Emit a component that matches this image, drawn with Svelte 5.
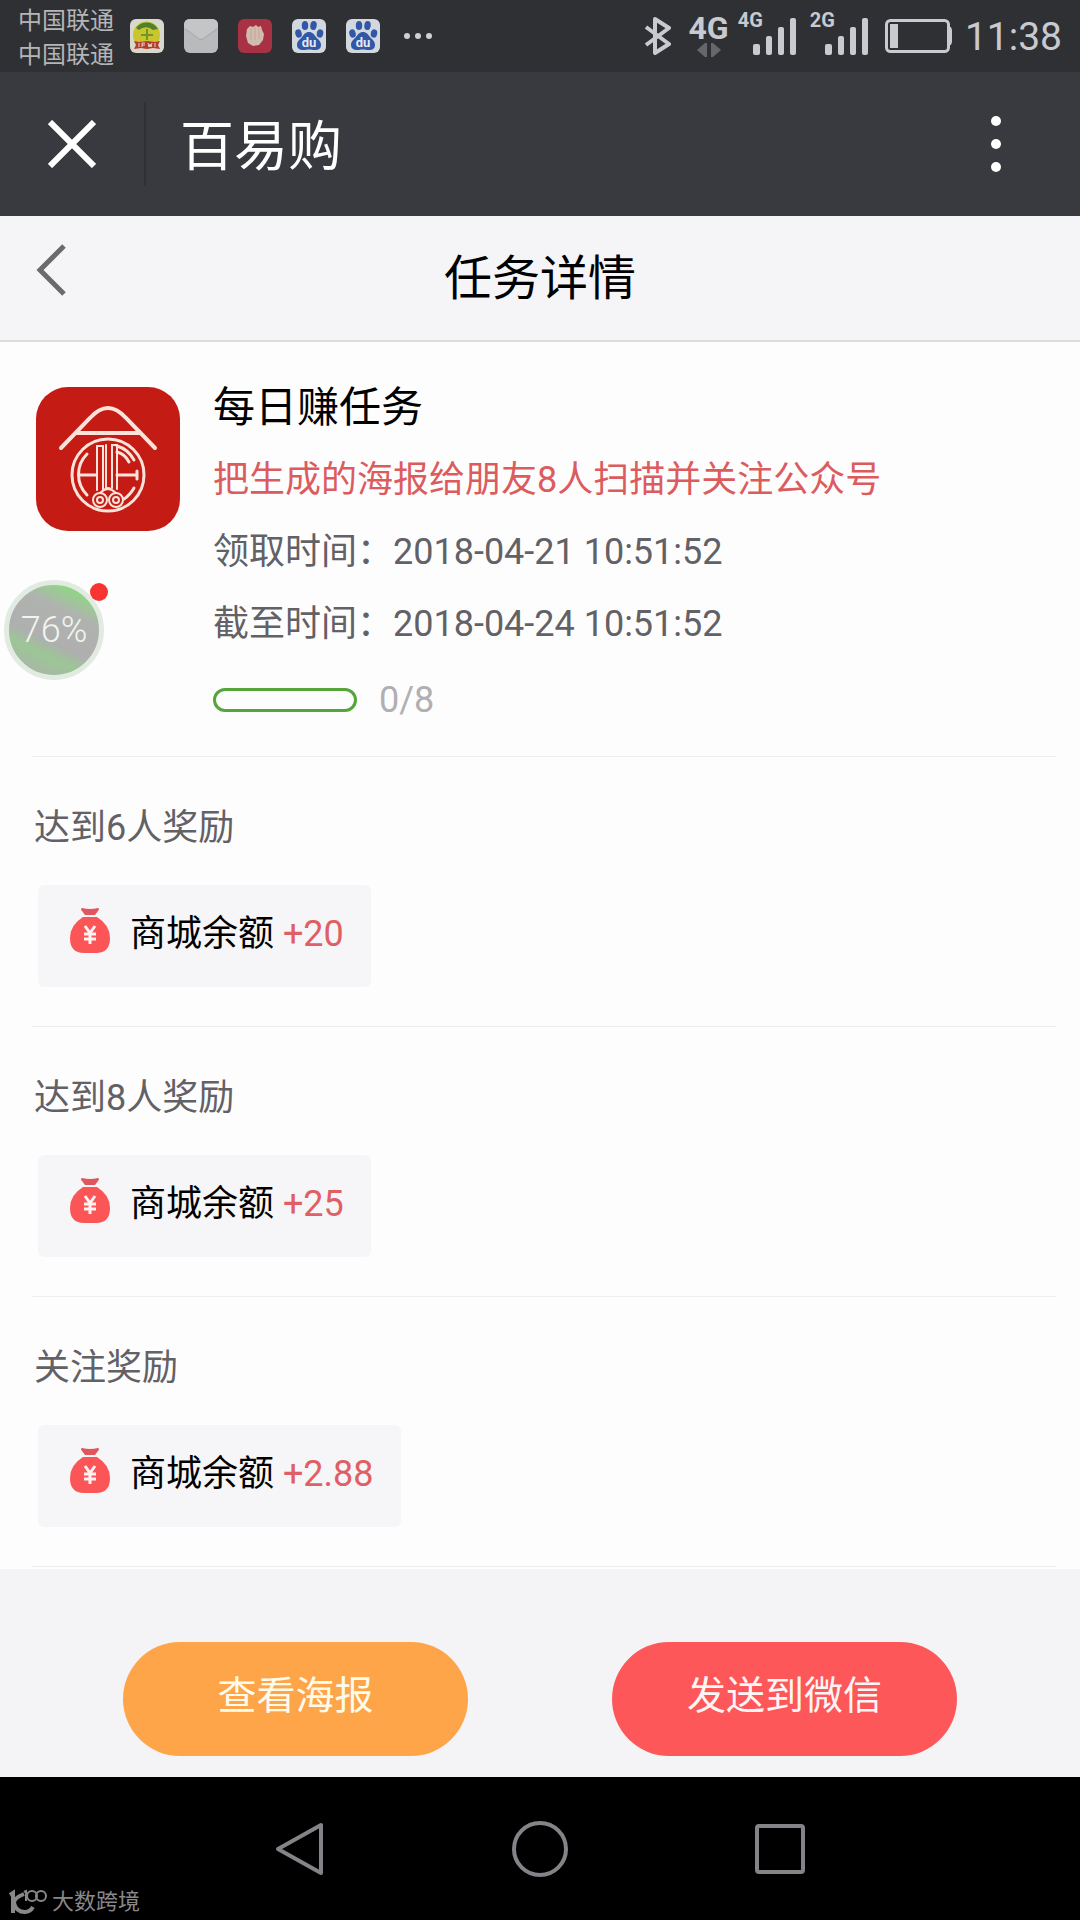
<script lang="ts">
  type Reward = { label: string; amount: string };

  const carriers = ['中国联通', '中国联通'];
  const networks = ['4G', '2G'];

  const task = {
    name: '每日赚任务',
    description: '把生成的海报给朋友8人扫描并关注公众号',
    received: '2018-04-21 10:51:52',
    deadline: '2018-04-24 10:51:52',
    done: 0,
    total: 8
  };

  const rewards: Reward[] = [
    { label: '达到6人奖励', amount: '+20' },
    { label: '达到8人奖励', amount: '+25' },
    { label: '关注奖励', amount: '+2.88' }
  ];
</script>

{#snippet baiduIcon()}
  <svg class="app-icon" viewBox="0 0 34 34" aria-hidden="true">
    <rect width="34" height="34" rx="6" fill="#d3d7de" />
    <g fill="#3057a8">
      <ellipse cx="6.5" cy="14.5" rx="3.2" ry="4.2" transform="rotate(-15 6.5 14.5)" />
      <ellipse cx="13" cy="6.5" rx="3.2" ry="4.6" />
      <ellipse cx="21.5" cy="6.5" rx="3.2" ry="4.6" transform="rotate(8 21.5 6.5)" />
      <ellipse cx="28" cy="14.5" rx="3.2" ry="4.2" transform="rotate(12 28 14.5)" />
      <path d="M17 13c3.500 0 5 2.500 7 5s5 4 5 8-3 5-6 5-4-.6-6-.6-3.500.6-6 .6-6-1-6-5 3-5.500 5-8 3.500-5 7-5z" />
    </g>
    <text x="17" y="28" text-anchor="middle" font-size="13" font-weight="700" fill="#e6e9ef">du</text>
  </svg>
{/snippet}

<div class="screen">
  <div class="status-bar">
    <div class="carriers">
      {#each carriers as carrier}
        <span>{carrier}</span>
      {/each}
    </div>
    <div class="notifications">
      <svg class="app-icon" viewBox="0 0 34 34" aria-hidden="true">
        <rect width="34" height="34" rx="6" fill="#d9d8cf" />
        <circle cx="16.500" cy="16" r="13.500" fill="#c9c52c" />
        <path d="M6 9a13 13 0 0 1 22 1l-5 1a10 10 0 0 0-14 0z" fill="#4d8130" />
        <path d="M16 10h2v5h5v2h-5v4h-2v-4h-5v-2h5z" fill="#6f962c" />
        <path d="M4 22l5 1 8-1 8 1 5-1-2 4 2 4-7-1-6 1-6-1-7 1 2-4z" fill="#b53b30" />
        <path d="M9 24v4M12 28v-4h3M12 26h3M18 24l1 4 1-3 1 3 1-4M25 24v4" stroke="#e0d9c0" fill="none" />
      </svg>
      <svg class="app-icon" viewBox="0 0 34 34" aria-hidden="true">
        <rect width="34" height="34" rx="6" fill="#b9babb" />
        <path d="M0 8l15 11q2 1.500 4 0L34 8V6q0-6-6-6H6Q0 0 0 6z" fill="#c4c5c6" />
        <path d="M1 10l14 10q2 1 4 0l14-10" fill="none" stroke="#a9aaab" />
      </svg>
      <svg class="app-icon" viewBox="0 0 34 34" aria-hidden="true">
        <rect width="34" height="34" rx="6" fill="#a83143" />
        <path d="M9 10l3-3 3 1 3-2 2 2 3-1 1 4 2 4-1 6-4 5-6 1-5-3-2-7z" fill="#d1bcb0" />
        <path d="M13 9v12M17 8v13M21 9v12" stroke="#bfa59a" />
      </svg>
      {@render baiduIcon()}
      {@render baiduIcon()}
      <svg class="more-dots" viewBox="0 0 28 6" aria-hidden="true">
        <circle cx="3" cy="3" r="3" /><circle cx="14" cy="3" r="3" /><circle cx="25" cy="3" r="3" />
      </svg>
    </div>

    <div class="indicators">
      <svg class="bluetooth" viewBox="0 0 28 38" aria-hidden="true">
        <path d="M2 10l23 17-14 9V2l14 9L2 28" />
      </svg>
      <div class="data">
        <span>4G</span>
        <svg viewBox="0 0 24 16" aria-hidden="true">
          <path d="M0 8l8-7h2v14H8zM24 8l-8-7h-2v14h2z" />
        </svg>
      </div>
      {#each networks as network}
        <div class="signal">
          <span>{network}</span>
          <svg viewBox="0 0 44 38" aria-hidden="true">
            <rect x="0" y="27" width="7" height="11" rx="2" />
            <rect x="13" y="19" width="6" height="19" rx="2" />
            <rect x="25" y="10" width="6" height="28" rx="2" />
            <rect x="37" y="1" width="6" height="37" rx="2" />
          </svg>
        </div>
      {/each}
      <svg class="battery" viewBox="0 0 68 34" aria-hidden="true">
        <rect x="1.500" y="1.500" width="62" height="31" rx="4" fill="none" stroke="#c9cacf" stroke-width="3" />
        <rect x="5" y="5" width="8" height="24" fill="#c9cacf" />
        <path d="M63 8h3l1 3v12l-1 3h-3z" fill="#c9cacf" />
      </svg>
      <time class="clock">11:38</time>
    </div>
  </div>

  <div class="app-bar">
    <button class="close" aria-label="关闭">
      <svg viewBox="0 0 48 48" aria-hidden="true"><path d="M2 2l44 44M46 2L2 46" /></svg>
    </button>
    <span class="app-name">百易购</span>
    <button class="menu" aria-label="更多">
      <svg viewBox="0 0 10 56" aria-hidden="true">
        <circle cx="5" cy="5" r="5" /><circle cx="5" cy="28" r="5" /><circle cx="5" cy="51" r="5" />
      </svg>
    </button>
  </div>

  <header class="page-header">
    <button class="back" aria-label="返回">
      <svg viewBox="0 0 32 52" aria-hidden="true"><path d="M28 2L4 26l24 24" /></svg>
    </button>
    <h1>任务详情</h1>
  </header>

  <main>
    <section class="task">
      <svg class="logo" viewBox="0 0 144 144" aria-hidden="true">
        <rect width="144" height="144" rx="32" fill="#c51b15" />
        <g fill="none" stroke="#fbe3d9" stroke-linecap="round">
          <path d="M25 61L54 31q18-20 36 0l29 30" stroke-width="4" />
          <path d="M39 46h66" stroke-width="4" stroke-linecap="butt" />
          <circle cx="72" cy="88" r="36" stroke-width="3" />
          <path d="M51 67a29 29 0 0 0 0 41" stroke-width="3" />
          <path d="M43 88h17M81 88h20M101 84v8" stroke-width="3" />
          <path d="M61 103V59h6v44M70 58v43M76 101V58h5v44" stroke-width="2" />
          <path d="M81 59q11 3 17 14M81 65q8 2 12 10M98 101q-4 7-10 11" stroke-width="3" />
          <path d="M64 106q8-8 16 0M68 103q4-4 8 0" stroke-width="2" />
          <circle cx="64" cy="113" r="7" stroke-width="2" />
          <circle cx="64" cy="113" r="3" stroke-width="2" />
          <circle cx="80" cy="113" r="7" stroke-width="2" />
          <circle cx="80" cy="113" r="3" stroke-width="2" />
        </g>
      </svg>
      <div class="task-info">
        <h2>{task.name}</h2>
        <p class="task-desc">{task.description}</p>
        <p>领取时间：{task.received}</p>
        <p>截至时间：{task.deadline}</p>
        <div class="progress-row">
          <div
            class="progress"
            role="progressbar"
            aria-label="任务进度"
            aria-valuenow={task.done}
            aria-valuemin="0"
            aria-valuemax={task.total}
          >
            <div class="progress-fill" style="width: {(task.done / task.total) * 100}%"></div>
          </div>
          <span>{task.done}/{task.total}</span>
        </div>
      </div>
      <div class="float-ball">
        76%
        <i class="badge"></i>
      </div>
    </section>

    {#each rewards as reward}
      <section class="reward">
        <h3>{reward.label}</h3>
        <div class="chip">
          <svg class="bag" viewBox="0 0 40 46" aria-hidden="true">
            <path d="M12 1q8 2 16 0 2 1 0 3l-3 4H15l-3-4q-2-2 0-3z" fill="#e2555c" />
            <path d="M13 10h14q13 8 13 21 0 15-14 15H14Q0 46 0 31q0-13 13-21z" fill="#fc5558" />
            <path d="M15 19l5 7 5-7M14 27h12M14 32h12M20 26v11" fill="none" stroke="#fff2f0" stroke-width="3" />
          </svg>
          <span>商城余额 <em>{reward.amount}</em></span>
        </div>
      </section>
    {/each}
  </main>

  <div class="actions">
    <button class="poster">查看海报</button>
    <button class="send">发送到微信</button>
  </div>

  <nav class="system-nav">
    <button aria-label="后退">
      <svg viewBox="0 0 56 56" aria-hidden="true"><path d="M49 4v48L6 28z" /></svg>
    </button>
    <button aria-label="主屏幕">
      <svg viewBox="0 0 56 56" aria-hidden="true"><circle cx="28" cy="28" r="26" /></svg>
    </button>
    <button aria-label="最近任务">
      <svg viewBox="0 0 56 56" aria-hidden="true"><rect x="5" y="5" width="46" height="46" rx="2" /></svg>
    </button>
    <div class="watermark">
      <svg viewBox="0 0 38 26" aria-hidden="true">
        <path d="M1 6l3-2v20M15 5q-10 4-10 9 2 9 11 9 5 0 8-5" stroke-width="4" />
        <path d="M15 3l2-1v10" stroke-width="2" />
        <circle cx="23" cy="7" r="5" stroke-width="2" />
        <circle cx="32" cy="7" r="5" stroke-width="2" />
      </svg>
      <span>大数跨境</span>
    </div>
  </nav>
</div>

<style>
  :global(body) {
    margin: 0;
    background: #000;
  }

  .screen {
    display: flex;
    flex-direction: column;
    min-height: 100vh;
    font-family: Roboto, 'Noto Sans CJK SC', sans-serif;
    font-size: 36px;
    color: #626165;
    background: #fefdfe;
  }

  button {
    padding: 0;
    border: 0;
    background: none;
    font-family: inherit;
    cursor: pointer;
  }

  svg {
    display: block;
    flex: none;
  }

  h1,
  h2,
  h3,
  p {
    margin: 0;
    font-weight: 400;
  }

  .status-bar {
    display: flex;
    align-items: center;
    height: 72px;
    padding: 0 18px;
    color: #c9cacf;
    background: #2f3034;
  }

  .carriers {
    display: flex;
    flex-direction: column;
    padding-top: 4px;
    font-size: 24px;
    line-height: 34px;
    color: #b4b5b6;
  }

  .notifications {
    display: flex;
    align-items: center;
    gap: 20px;
    margin-left: 16px;
  }

  .app-icon {
    width: 34px;
    height: 34px;
  }

  .more-dots {
    width: 28px;
    height: 6px;
    margin-left: 4px;
    fill: #d0d0d2;
  }

  .indicators {
    display: flex;
    align-items: center;
    margin-left: auto;
  }

  .bluetooth {
    width: 28px;
    height: 38px;
    margin-right: 16px;
    fill: none;
    stroke: #c9cacf;
    stroke-width: 4;
    stroke-linejoin: round;
  }

  .data {
    display: flex;
    flex-direction: column;
    align-items: center;
    font-size: 32px;
    font-weight: 700;
    line-height: 28px;
  }

  .data svg {
    width: 24px;
    height: 16px;
    fill: #66676b;
  }

  .signal {
    display: flex;
    align-items: flex-end;
    margin-left: 9px;
  }

  .signal span {
    align-self: flex-start;
    margin-right: -10px;
    font-size: 20px;
    font-weight: 700;
    line-height: 6px;
  }

  .signal svg {
    width: 44px;
    height: 38px;
    margin-right: 4px;
    fill: #c9cacf;
  }

  .battery {
    width: 68px;
    height: 34px;
    margin: 0 12px;
  }

  .clock {
    padding-top: 2px;
    font-size: 39px;
  }

  .app-bar {
    display: flex;
    align-items: center;
    height: 144px;
    color: #fff;
    background: #393a3f;
  }

  .close {
    display: grid;
    place-items: center;
    width: 146px;
    height: 84px;
    border-right: 2px solid #303136;
  }

  .close svg {
    width: 48px;
    height: 48px;
    stroke: #fff;
    stroke-width: 6;
  }

  .app-name {
    flex: 1;
    margin-left: 34px;
    padding-top: 8px;
    font-size: 54px;
    line-height: 80px;
  }

  .menu {
    display: grid;
    place-items: center;
    width: 168px;
    height: 84px;
  }

  .menu svg {
    width: 10px;
    height: 56px;
    fill: #fff;
  }

  .page-header {
    display: grid;
    grid-template-columns: 120px 1fr 120px;
    align-items: center;
    height: 124px;
    border-bottom: 2px solid #dedade;
    background: #f5f4f7;
  }

  .back {
    padding: 0 0 16px 36px;
  }

  .back svg {
    width: 32px;
    height: 52px;
    fill: none;
    stroke: #6b6a6d;
    stroke-width: 5;
  }

  h1 {
    padding-top: 2px;
    font-size: 48px;
    line-height: 72px;
    text-align: center;
    color: #000;
  }

  main {
    padding: 0 24px 2px 32px;
  }

  .task {
    position: relative;
    display: flex;
    gap: 33px;
    padding: 30px 0 20px 4px;
    border-bottom: 1px solid #efecf1;
    line-height: 72px;
  }

  .logo {
    width: 144px;
    height: 144px;
    margin-top: 15px;
  }

  .task-info {
    flex: 1;
    min-width: 0;
  }

  h2 {
    font-size: 42px;
    color: #000;
  }

  .task-desc {
    color: #dc5c5e;
  }

  .progress-row {
    display: flex;
    align-items: center;
    gap: 22px;
    margin-top: 4px;
    color: #b0afb2;
  }

  .progress {
    box-sizing: border-box;
    width: 144px;
    height: 24px;
    border: 3px solid #55a63a;
    border-radius: 12px;
    overflow: hidden;
  }

  .progress-fill {
    height: 100%;
    background: #55a63a;
  }

  .float-ball {
    position: absolute;
    left: -28px;
    top: 238px;
    box-sizing: border-box;
    width: 100px;
    height: 100px;
    border: 5px solid #e2ebe1;
    border-radius: 50%;
    font-weight: 300;
    line-height: 90px;
    text-align: center;
    color: #f1f4f1;
    background: linear-gradient(25deg, #a9b5a8 10%, #9cc696 28%, #aeafae 40%, #b0b2b0 68%, #93d388 86%);
  }

  .badge {
    position: absolute;
    top: -2px;
    right: -9px;
    width: 18px;
    height: 18px;
    border-radius: 50%;
    background: #f73431;
  }

  .reward {
    padding: 44px 0 39px 2px;
    border-bottom: 1px solid #efecf1;
  }

  h3 {
    font-size: 36px;
    line-height: 54px;
  }

  .chip {
    display: inline-flex;
    align-items: center;
    gap: 20px;
    box-sizing: border-box;
    height: 102px;
    margin: 30px 0 0 4px;
    padding: 0 27px 12px 32px;
    border-radius: 6px;
    vertical-align: top;
    color: #000;
    background: #f6f5f8;
  }

  .chip em {
    font-style: normal;
    color: #e05f64;
  }

  .bag {
    width: 40px;
    height: 46px;
  }

  .actions {
    display: flex;
    justify-content: center;
    gap: 144px;
    padding: 73px 24px 21px;
    background: #f4f3f6;
  }

  .actions button {
    width: 345px;
    height: 114px;
    padding-bottom: 14px;
    border-radius: 57px;
    font-size: 39px;
    color: #fffbea;
  }

  .poster {
    background: #fda548;
  }

  .actions .send {
    color: #fff5f4;
    background: #fd5759;
  }

  .system-nav {
    position: relative;
    display: flex;
    flex: 1;
    align-items: flex-start;
    justify-content: center;
    min-height: 144px;
    background: #000;
  }

  .system-nav button {
    display: grid;
    place-items: center;
    width: 240px;
    height: 144px;
  }

  .system-nav button svg {
    width: 56px;
    height: 56px;
    fill: none;
    stroke: #858387;
    stroke-width: 4;
    stroke-linejoin: round;
  }

  .watermark {
    position: absolute;
    left: 9px;
    bottom: 3px;
    display: flex;
    align-items: center;
    gap: 5px;
    font-size: 22px;
    line-height: 32px;
    color: #88878a;
  }

  .watermark svg {
    width: 38px;
    height: 26px;
    fill: none;
    stroke: #88878a;
  }
</style>
